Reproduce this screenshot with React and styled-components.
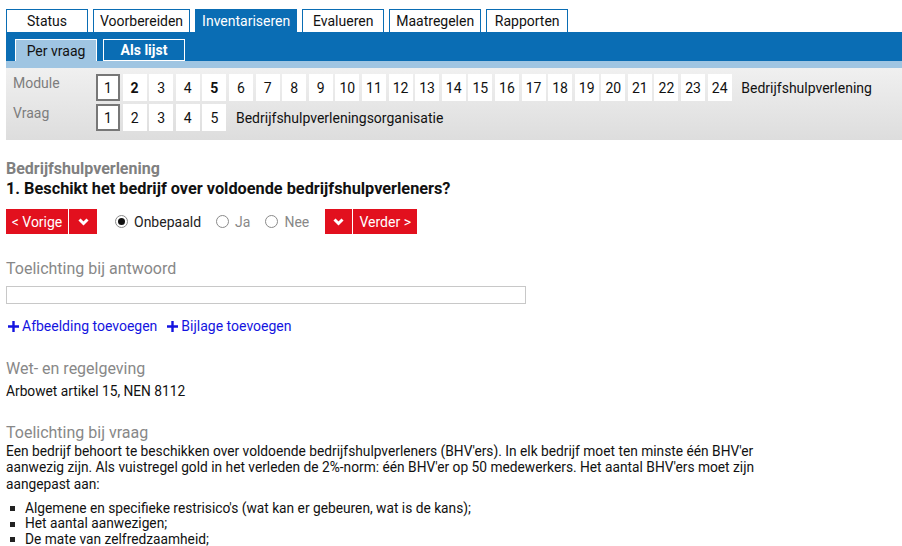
import React from 'react'
import styled, {createGlobalStyle} from 'styled-components'

const Global = createGlobalStyle`
  body {
    margin: 0;
    background: #fff;
    font-family: Roboto, "Liberation Sans", sans-serif;
    color: #111;
  }
`

const Page = styled.div`
  padding: 9px 0 0 6px;
  width: 896px;
`

const TabRow = styled.div`
  display: flex;
  gap: 5px;
`

const Tab = styled.div`
  box-sizing: border-box;
  min-width: 82px;
  height: 23px;
  padding: 0 6px;
  border: 1px solid #0a6db4;
  border-bottom: 0;
  background: ${p => p.active ? '#0a6db4' : '#fff'};
  color: ${p => p.active ? '#fff' : '#111'};
  font-size: 14px;
  display: flex;
  align-items: center;
  justify-content: center;
`

const BlueBar = styled.div`
  background: #0a6db4;
  height: 29px;
  padding: 7px 0 0 9px;
  box-sizing: border-box;
  display: flex;
  gap: 6px;
  align-items: flex-end;
`

const SubTab = styled.div`
  box-sizing: border-box;
  width: 82px;
  height: 22px;
  border: 1px solid #fff;
  border-bottom: ${p => p.active ? '0' : '1px solid #fff'};
  background: ${p => p.active ? '#9fc5e2' : '#0a6db4'};
  color: ${p => p.active ? '#111' : '#fff'};
  font-weight: ${p => p.active ? 400 : 700};
  font-size: 14px;
  display: flex;
  align-items: center;
  justify-content: center;
`

const Strip = styled.div`
  height: 7px;
  background: #9fc5e2;
`

const Panel = styled.div`
  height: 72px;
  box-sizing: border-box;
  padding: 6px 0 0 7px;
  background: linear-gradient(#f0f0f0, #dddddd);
  display: flex;
  flex-direction: column;
  gap: 3px;
`

const NavRow = styled.div`
  display: flex;
  align-items: flex-start;
  height: 27px;
`

const NavLabel = styled.div`
  width: 83px;
  font-size: 14px;
  color: #7d7d7d;
  line-height: 18px;
`

const NumBox = styled.div`
  box-sizing: border-box;
  width: 24px;
  height: 27px;
  margin-right: 2.6px;
  background: #fff;
  border: ${p => p.active ? '2px solid #777' : '0'};
  font-size: 14px;
  font-weight: ${p => p.bold ? 700 : 400};
  display: flex;
  align-items: center;
  justify-content: center;
  color: #111;
`

const NavTitle = styled.div`
  height: 27px;
  display: flex;
  align-items: center;
  margin-left: 7px;
  font-size: 14px;
  color: #111;
`

const Content = styled.div`
  padding-top: 19px;
`

const Category = styled.div`
  font-size: 16px;
  line-height: 20px;
  font-weight: 700;
  color: #808080;
`

const Question = styled.div`
  font-size: 16.3px;
  line-height: 20px;
  font-weight: 700;
  color: #111;
`

const AnswerRow = styled.div`
  display: flex;
  align-items: center;
  margin-top: 10px;
  height: 25px;
`

const RedButton = styled.div`
  height: 25px;
  box-sizing: border-box;
  width: ${p => p.w}px;
  background: #e2101e;
  color: #fff;
  font-size: 14px;
  display: flex;
  align-items: center;
  justify-content: center;
  margin-right: 1px;
`

const Radios = styled.div`
  display: flex;
  align-items: center;
  margin: 0 16px 0 17px;
`

const RadioItem = styled.label`
  display: flex;
  align-items: center;
  gap: 6px;
  margin-right: 15px;
  font-size: 14px;
  color: ${p => p.checked ? '#222' : '#888'};
  &:last-child { margin-right: 0; }
`

const RadioDot = styled.span`
  box-sizing: border-box;
  width: 13px;
  height: 13px;
  border-radius: 50%;
  border: 1px solid #8a8a8a;
  background: #fff;
  display: flex;
  align-items: center;
  justify-content: center;
  &::after {
    content: '';
    width: 7px;
    height: 7px;
    border-radius: 50%;
    background: ${p => p.checked ? '#111' : 'transparent'};
  }
`

const SectionTitle = styled.div`
  font-size: 16px;
  line-height: 20px;
  color: #888;
  margin-top: ${p => p.mt}px;
`

const TextBox = styled.div`
  box-sizing: border-box;
  width: 520px;
  height: 18px;
  border: 1px solid #c8c8c8;
  margin-top: 7px;
`

const Links = styled.div`
  display: flex;
  gap: 8px;
  margin-top: 13px;
  font-size: 14px;
  line-height: 18px;
`

const AddLink = styled.a`
  display: flex;
  align-items: center;
  gap: 3px;
  color: #1414e0;
  text-decoration: none;
  padding-left: 2px;
`

const Body = styled.div`
  font-size: 13.75px;
  line-height: 16.7px;
  color: #111;
  margin-top: ${p => p.mt}px;
  max-width: 785px;
`

const List = styled.ul`
  margin: 8px 0 0;
  padding: 0;
  list-style: none;
  font-size: 13.75px;
  line-height: 15.5px;
  color: #111;
`

const ListItem = styled.li`
  display: flex;
  align-items: center;
  gap: 10px;
  padding-left: 4px;
  &::before {
    content: '';
    width: 5px;
    height: 5px;
    background: #222;
    flex: none;
  }
`

const Chevron = () => (
  <svg width="11" height="8" viewBox="0 0 11 8">
    <polyline points="1.5,1.5 5.5,5.5 9.5,1.5" fill="none" stroke="#fff" strokeWidth="3" />
  </svg>
)

const Plus = () => (
  <svg width="11" height="11" viewBox="0 0 11 11">
    <path d="M5.5 0v11M0 5.5h11" stroke="#1414e0" strokeWidth="2.4" />
  </svg>
)

const tabs = ['Status', 'Voorbereiden', 'Inventariseren', 'Evalueren', 'Maatregelen', 'Rapporten']
const modules = Array.from({length: 24}, (_, i) => i + 1)

export default function App() {
  return (
    <Page>
      <Global />
      <TabRow>
        {tabs.map(t => <Tab key={t} active={t === 'Inventariseren'}>{t}</Tab>)}
      </TabRow>
      <BlueBar>
        <SubTab active>Per vraag</SubTab>
        <SubTab>Als lijst</SubTab>
      </BlueBar>
      <Strip />
      <Panel>
        <NavRow>
          <NavLabel>Module</NavLabel>
          {modules.map(n => (
            <NumBox key={n} active={n === 1} bold={n === 2 || n === 5}>{n}</NumBox>
          ))}
          <NavTitle>Bedrijfshulpverlening</NavTitle>
        </NavRow>
        <NavRow>
          <NavLabel>Vraag</NavLabel>
          {[1, 2, 3, 4, 5].map(n => <NumBox key={n} active={n === 1}>{n}</NumBox>)}
          <NavTitle>Bedrijfshulpverleningsorganisatie</NavTitle>
        </NavRow>
      </Panel>

      <Content>
        <Category>Bedrijfshulpverlening</Category>
        <Question>1. Beschikt het bedrijf over voldoende bedrijfshulpverleners?</Question>
        <AnswerRow>
          <RedButton w={62}>&lt; Vorige</RedButton>
          <RedButton w={28}><Chevron /></RedButton>
          <Radios>
            <RadioItem checked><RadioDot checked />Onbepaald</RadioItem>
            <RadioItem><RadioDot />Ja</RadioItem>
            <RadioItem><RadioDot />Nee</RadioItem>
          </Radios>
          <RedButton w={27}><Chevron /></RedButton>
          <RedButton w={64}>Verder &gt;</RedButton>
        </AnswerRow>

        <SectionTitle mt={25}>Toelichting bij antwoord</SectionTitle>
        <TextBox />
        <Links>
          <AddLink href="#"><Plus />Afbeelding toevoegen</AddLink>
          <AddLink href="#"><Plus />Bijlage toevoegen</AddLink>
        </Links>

        <SectionTitle mt={24}>Wet- en regelgeving</SectionTitle>
        <Body mt={4}>Arbowet artikel 15, NEN 8112</Body>

        <SectionTitle mt={23}>Toelichting bij vraag</SectionTitle>
        <Body mt={0}>
          Een bedrijf behoort te beschikken over voldoende bedrijfshulpverleners (BHV'ers). In elk bedrijf moet ten minste één BHV'er aanwezig zijn. Als vuistregel gold in het verleden de 2%-norm: één BHV'er op 50 medewerkers. Het aantal BHV'ers moet zijn aangepast aan:
        </Body>
        <List>
          <ListItem>Algemene en specifieke restrisico's (wat kan er gebeuren, wat is de kans);</ListItem>
          <ListItem>Het aantal aanwezigen;</ListItem>
          <ListItem>De mate van zelfredzaamheid;</ListItem>
        </List>
      </Content>
    </Page>
  )
}
